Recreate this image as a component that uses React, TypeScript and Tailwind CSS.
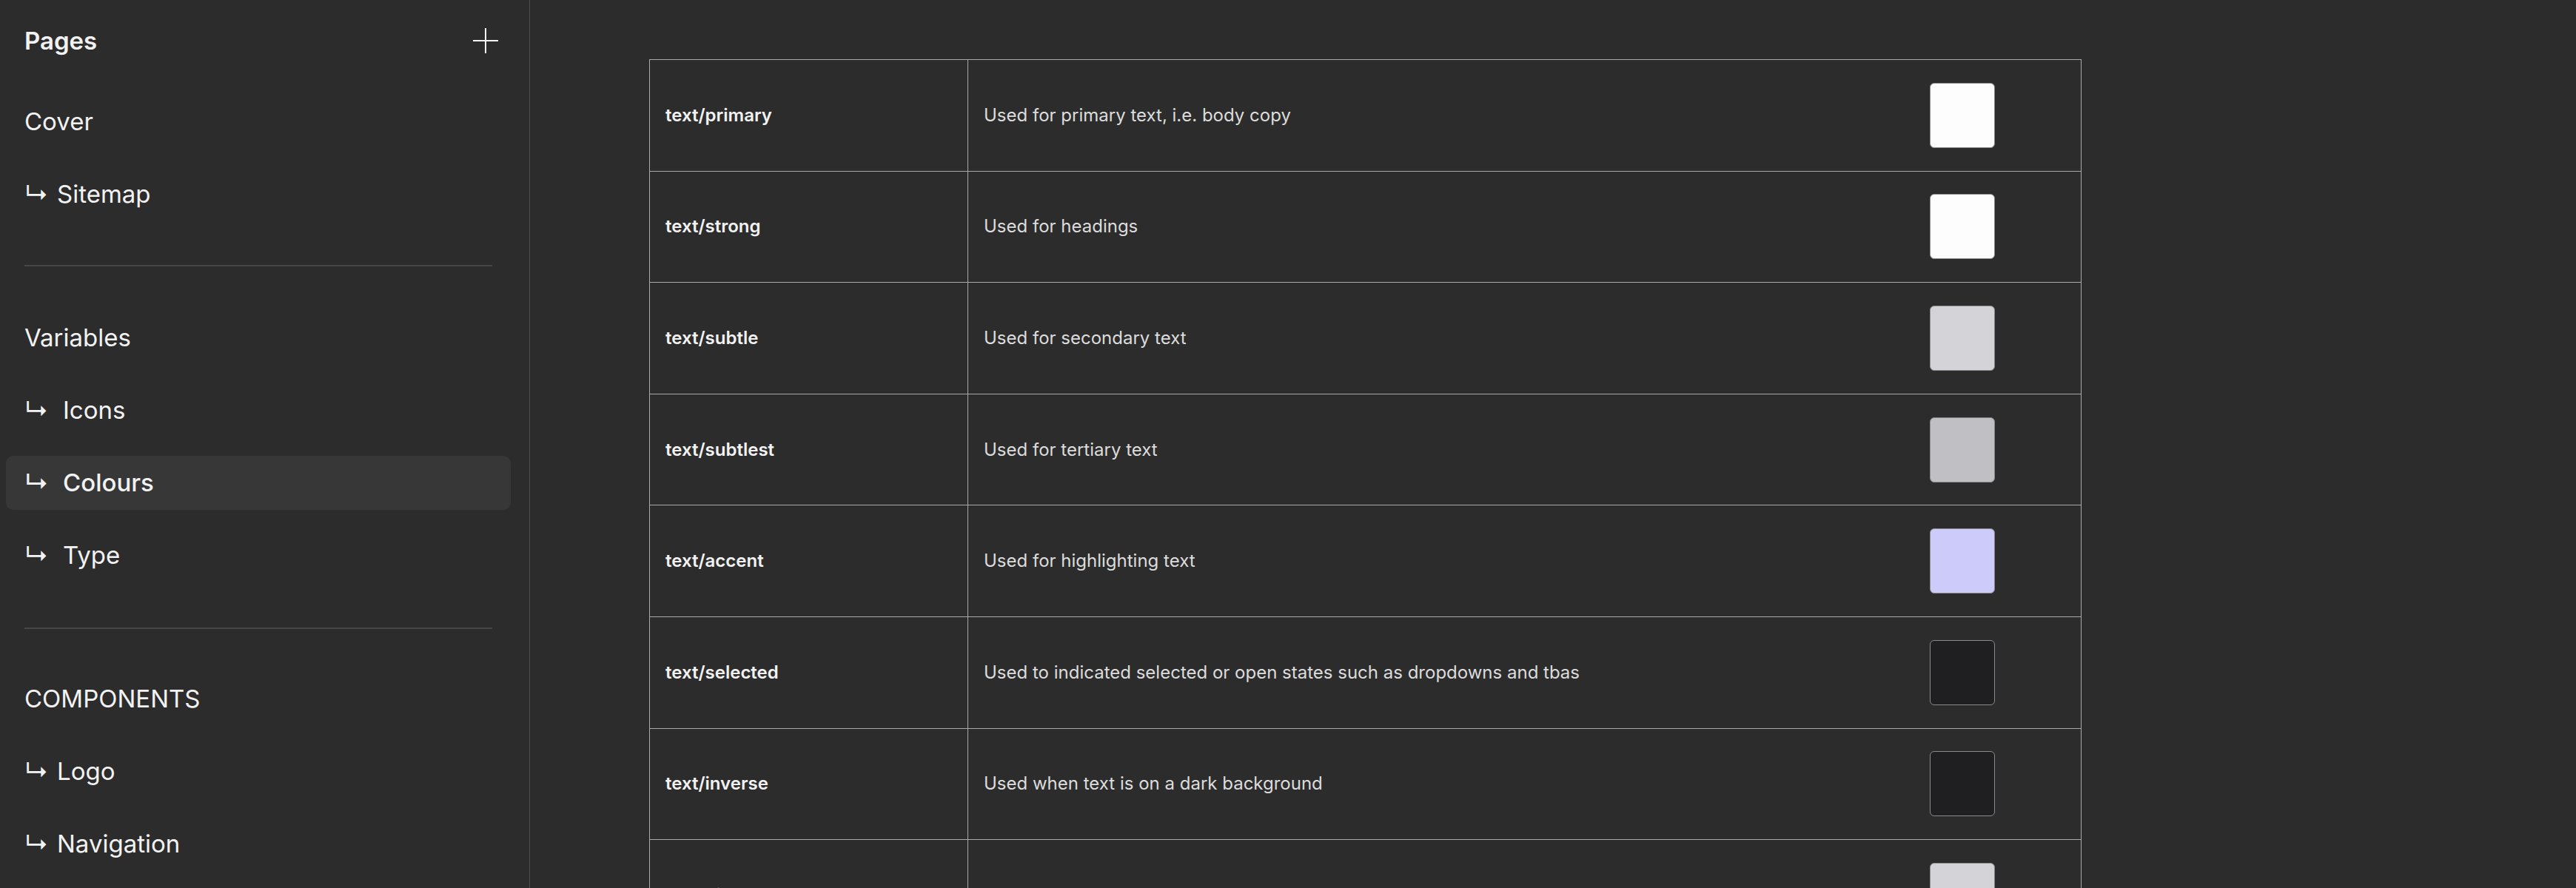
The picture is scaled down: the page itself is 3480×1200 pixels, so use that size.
type Row = { name: string; note: string; swatch: string }

const ROWS: Row[] = [
  { name: 'text/primary', note: 'Used for primary text, i.e. body copy', swatch: 'bg-[#fdfdfd]' },
  { name: 'text/strong', note: 'Used for headings', swatch: 'bg-[#fdfdfd]' },
  { name: 'text/subtle', note: 'Used for secondary text', swatch: 'bg-[#d4d3d8]' },
  { name: 'text/subtlest', note: 'Used for tertiary text', swatch: 'bg-[#c0bfc4]' },
  { name: 'text/accent', note: 'Used for highlighting text', swatch: 'bg-[#cccbf9]' },
  { name: 'text/selected', note: 'Used to indicated selected or open states such as dropdowns and tbas', swatch: 'bg-[#1f1f22]' },
  { name: 'text/inverse', note: 'Used when text is on a dark background', swatch: 'bg-[#1f1f22]' },
  { name: 'text/disabled', note: 'Used for disabled text', swatch: 'bg-[#d4d3d8]' },
]

function NavItem({ label, sub, wide, active }: { label: string; sub?: boolean; wide?: boolean; active?: boolean }) {
  return (
    <div
      className={`flex h-[73px] items-center rounded-[10px] pl-[25px] ${
        active ? 'bg-[#373737] font-medium' : ''
      }`}
    >
      {sub && <span className={`${wide ? 'w-[52px]' : 'w-[44px]'} shrink-0`}>↳</span>}
      <span>{label}</span>
    </div>
  )
}

function Divider({ className }: { className: string }) {
  return <div className={`mx-[25px] h-[2px] bg-[#464646] ${className}`} />
}

export default function App() {
  return (
    <div
      className="flex h-screen overflow-hidden bg-[#2c2c2c] text-[#f2f2f2]"
      style={{ fontFamily: 'Inter, "Noto Sans", sans-serif' }}
    >
      {/* Sidebar */}
      <aside className="h-full w-[716px] shrink-0 border-r border-[#4f4f4f] pt-[19px] text-[33px] leading-none">
        <div className="flex h-[72px] items-center justify-between pl-[33px] pr-[41px]">
          <span className="font-semibold">Pages</span>
          <svg width="36" height="36" viewBox="0 0 36 36" fill="none" stroke="#f5f5f5" strokeWidth="2">
            <path d="M18 1v34M1 18h34" />
          </svg>
        </div>

        <nav className="mt-[37px] flex flex-col pl-[8px] pr-[25px]">
          <NavItem label="Cover" />
          <div className="mt-[25px]">
            <NavItem label="Sitemap" sub />
          </div>
          <Divider className="mt-[59px]" />
          <div className="mt-[60px] flex flex-col gap-[25px]">
            <NavItem label="Variables" />
            <NavItem label="Icons" sub wide />
            <NavItem label="Colours" sub wide active />
            <NavItem label="Type" sub wide />
          </div>
          <Divider className="mt-[61px]" />
          <div className="mt-[58px] flex flex-col gap-[25px]">
            <NavItem label="COMPONENTS" />
            <NavItem label="Logo" sub />
            <NavItem label="Navigation" sub />
          </div>
        </nav>
      </aside>

      {/* Canvas */}
      <main className="flex-1 pl-[161px] pt-[80px]">
        <div className="w-[1935px] border-x border-t border-[#a9a9a9]">
          {ROWS.map(row => (
            <div key={row.name} className="flex h-[150.6px] border-b border-[#a9a9a9] text-[24px]">
              <div className="flex w-[430px] shrink-0 items-center border-r border-[#a9a9a9] pl-[21px] font-semibold text-[#f2f2f2]">
                {row.name}
              </div>
              <div className="flex flex-1 items-center pl-[21px] text-[#dcdcdc]">{row.note}</div>
              <div className="flex w-[321px] shrink-0 items-center justify-center">
                <div className={`h-[88px] w-[88px] rounded-[6px] border border-[#8a8a8a] ${row.swatch}`} />
              </div>
            </div>
          ))}
        </div>
      </main>
    </div>
  )
}
